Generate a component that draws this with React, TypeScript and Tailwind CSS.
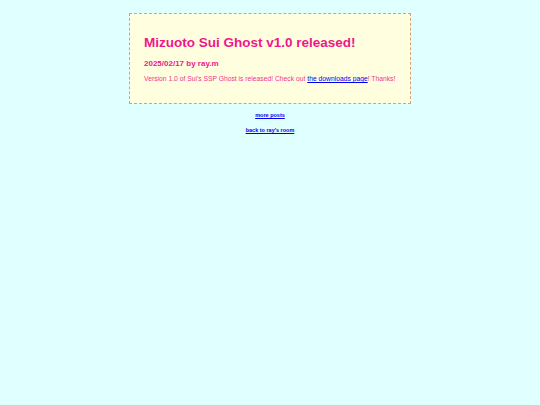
export default function App() {
  return (
    <div className="min-h-screen bg-[#e0ffff] pt-[13px] font-['Liberation_Sans',Arial,sans-serif]">
      <div className="mx-auto w-[282px] border border-dashed border-[#d4a07c] bg-[#ffffe0] px-[14px] pt-[21px] pb-[20px]">
        <h1 className="text-[13.5px] font-bold leading-[16px] text-[#f0168c]">Mizuoto Sui Ghost v1.0 released!</h1>
        <p className="mt-[8px] text-[8px] font-bold leading-[10px] text-[#f0168c]">2025/02/17 by ray.m</p>
        <p className="mt-[6px] text-[6.75px] leading-[8px] text-[#f0368c]">
          Version 1.0 of Sui's SSP Ghost is released! Check out{' '}
          <a href="#" className="text-[#0000ee] underline">the downloads page</a>! Thanks!
        </p>
      </div>
      <div className="mt-[8px] flex flex-col items-center gap-[8px] text-[5.5px] font-bold leading-[7px]">
        <a href="#" className="text-[#0000ee] underline">more posts</a>
        <a href="#" className="text-[#0000ee] underline">back to ray's room</a>
      </div>
    </div>
  );
}
